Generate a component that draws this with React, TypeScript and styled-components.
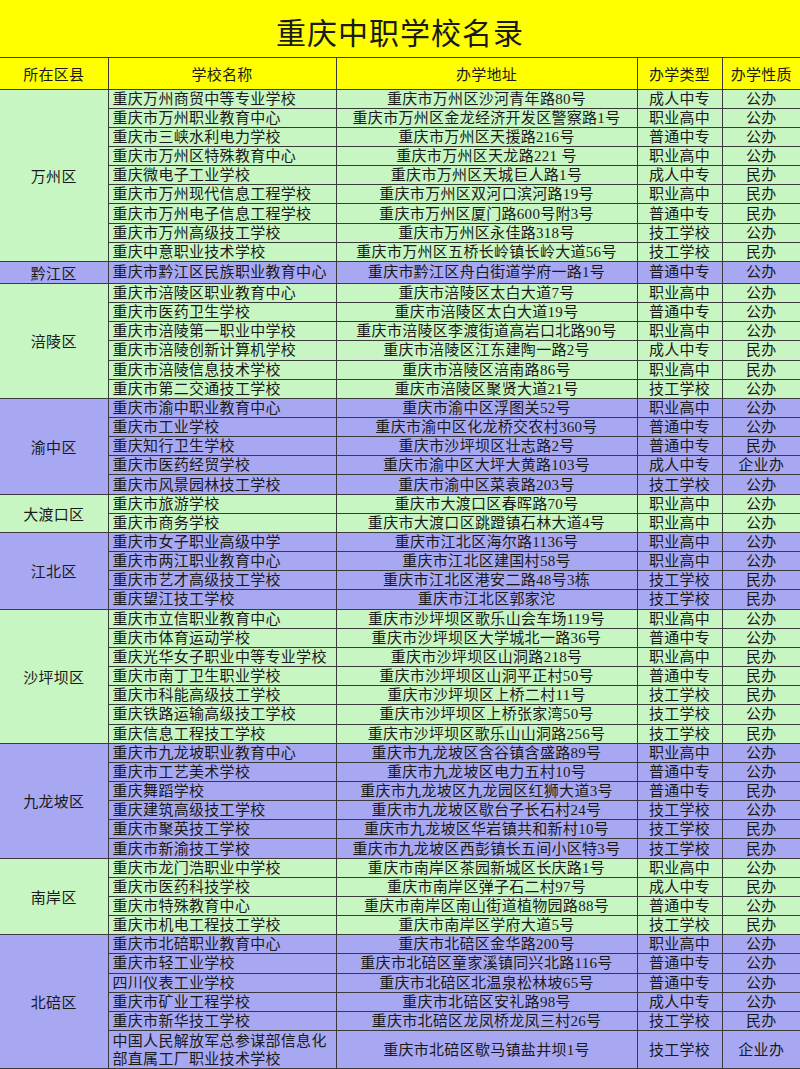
import styled, { createGlobalStyle } from "styled-components";

type Tone = "green" | "purple";

const tones: Record<Tone, string> = {
  green: "#c8f6c2",
  purple: "#a8a8f2",
};

const GlobalStyle = createGlobalStyle`
  html, body {
    margin: 0;
    padding: 0;
    background: #ffffff;
  }

  body {
    font-family: "Liberation Serif", "Noto Sans CJK SC", serif;
    color: #1a1a1a;
  }
`;

const Page = styled.div`
  width: 800px;
`;

const TitleBar = styled.div`
  display: flex;
  align-items: center;
  justify-content: center;

  height: 58px;
  background: #ffff00;
  border-bottom: 1px solid #3a3a3a;
  box-sizing: border-box;

  font-size: 30px;
  letter-spacing: 1px;
  padding-top: 4px;
`;

const Table = styled.table`
  width: 800px;
  table-layout: fixed;
  border-collapse: collapse;

  font-size: 15px;
  letter-spacing: 0.3px;
`;

const HeadRow = styled.tr`
  height: 31px;
  background: #ffff00;
`;

const HeadCell = styled.th`
  font-weight: 400;
  padding: 0;
  text-align: center;
  border: 1px solid #3a3a3a;
  border-top: none;

  &:first-child {
    border-left: none;
  }

  &:last-child {
    border-right: none;
  }
`;

const Row = styled.tr<{ $tone: Tone; $tall?: boolean }>`
  height: ${(p) => (p.$tall ? "38.4px" : "19.17px")};
  background: ${(p) => tones[p.$tone]};
`;

const DistrictCell = styled.td`
  padding: 0;
  text-align: center;
  vertical-align: middle;
  border: 1px solid #3a3a3a;
  border-left: none;
`;

const Cell = styled.td<{ $align?: "left" | "center" }>`
  padding: 0 2px 0 ${(p) => (p.$align === "left" ? "4px" : "2px")};
  text-align: ${(p) => p.$align ?? "center"};
  line-height: 18px;
  white-space: ${(p) => (p.$align === "left" ? "normal" : "nowrap")};
  border: 1px solid #3a3a3a;

  &:last-child {
    border-right: none;
  }
`;

type School = [string, string, string, string];

type Group = {
  district: string;
  tone: Tone;
  schools: School[];
};

const groups: Group[] = [
  {
    district: "万州区",
    tone: "green",
    schools: [
      ["重庆万州商贸中等专业学校", "重庆市万州区沙河青年路80号", "成人中专", "公办"],
      ["重庆市万州职业教育中心", "重庆市万州区金龙经济开发区警察路1号", "职业高中", "公办"],
      ["重庆市三峡水利电力学校", "重庆市万州区天援路216号", "普通中专", "公办"],
      ["重庆市万州区特殊教育中心", "重庆市万州区天龙路221 号", "职业高中", "公办"],
      ["重庆微电子工业学校", "重庆市万州区天城巨人路1号", "成人中专", "民办"],
      ["重庆市万州现代信息工程学校", "重庆市万州区双河口滨河路19号", "职业高中", "民办"],
      ["重庆市万州电子信息工程学校", "重庆市万州区厦门路600号附3号", "普通中专", "民办"],
      ["重庆市万州高级技工学校", "重庆市万州区永佳路318号", "技工学校", "公办"],
      ["重庆中意职业技术学校", "重庆市万州区五桥长岭镇长岭大道56号", "技工学校", "民办"],
    ],
  },
  {
    district: "黔江区",
    tone: "purple",
    schools: [
      ["重庆市黔江区民族职业教育中心", "重庆市黔江区舟白街道学府一路1号", "普通中专", "公办"],
    ],
  },
  {
    district: "涪陵区",
    tone: "green",
    schools: [
      ["重庆市涪陵区职业教育中心", "重庆市涪陵区太白大道7号", "职业高中", "公办"],
      ["重庆市医药卫生学校", "重庆市涪陵区太白大道19号", "普通中专", "公办"],
      ["重庆市涪陵第一职业中学校", "重庆市涪陵区李渡街道高岩口北路90号", "职业高中", "公办"],
      ["重庆市涪陵创新计算机学校", "重庆市涪陵区江东建陶一路2号", "成人中专", "民办"],
      ["重庆市涪陵信息技术学校", "重庆市涪陵区涪南路86号", "职业高中", "民办"],
      ["重庆市第二交通技工学校", "重庆市涪陵区聚贤大道21号", "技工学校", "公办"],
    ],
  },
  {
    district: "渝中区",
    tone: "purple",
    schools: [
      ["重庆市渝中职业教育中心", "重庆市渝中区浮图关52号", "职业高中", "公办"],
      ["重庆市工业学校", "重庆市渝中区化龙桥交农村360号", "普通中专", "公办"],
      ["重庆知行卫生学校", "重庆市沙坪坝区壮志路2号", "普通中专", "民办"],
      ["重庆市医药经贸学校", "重庆市渝中区大坪大黄路103号", "成人中专", "企业办"],
      ["重庆市风景园林技工学校", "重庆市渝中区菜袁路203号", "技工学校", "公办"],
    ],
  },
  {
    district: "大渡口区",
    tone: "green",
    schools: [
      ["重庆市旅游学校", "重庆市大渡口区春晖路70号", "职业高中", "公办"],
      ["重庆市商务学校", "重庆市大渡口区跳蹬镇石林大道4号", "职业高中", "公办"],
    ],
  },
  {
    district: "江北区",
    tone: "purple",
    schools: [
      ["重庆市女子职业高级中学", "重庆市江北区海尔路1136号", "职业高中", "公办"],
      ["重庆市两江职业教育中心", "重庆市江北区建国村58号", "职业高中", "公办"],
      ["重庆市艺才高级技工学校", "重庆市江北区港安二路48号3栋", "技工学校", "民办"],
      ["重庆望江技工学校", "重庆市江北区郭家沱", "技工学校", "民办"],
    ],
  },
  {
    district: "沙坪坝区",
    tone: "green",
    schools: [
      ["重庆市立信职业教育中心", "重庆市沙坪坝区歌乐山会车场119号", "职业高中", "公办"],
      ["重庆市体育运动学校", "重庆市沙坪坝区大学城北一路36号", "普通中专", "公办"],
      ["重庆光华女子职业中等专业学校", "重庆市沙坪坝区山洞路218号", "职业高中", "民办"],
      ["重庆市南丁卫生职业学校", "重庆市沙坪坝区山洞平正村50号", "普通中专", "民办"],
      ["重庆市科能高级技工学校", "重庆市沙坪坝区上桥二村11号", "技工学校", "民办"],
      ["重庆铁路运输高级技工学校", "重庆市沙坪坝区上桥张家湾50号", "技工学校", "公办"],
      ["重庆信息工程技工学校", "重庆市沙坪坝区歌乐山山洞路256号", "技工学校", "民办"],
    ],
  },
  {
    district: "九龙坡区",
    tone: "purple",
    schools: [
      ["重庆市九龙坡职业教育中心", "重庆市九龙坡区含谷镇含盛路89号", "职业高中", "公办"],
      ["重庆市工艺美术学校", "重庆市九龙坡区电力五村10号", "普通中专", "公办"],
      ["重庆舞蹈学校", "重庆市九龙坡区九龙园区红狮大道3号", "普通中专", "民办"],
      ["重庆建筑高级技工学校", "重庆市九龙坡区歇台子长石村24号", "技工学校", "公办"],
      ["重庆市聚英技工学校", "重庆市九龙坡区华岩镇共和新村10号", "技工学校", "民办"],
      ["重庆市新渝技工学校", "重庆市九龙坡区西彭镇长五间小区特3号", "技工学校", "民办"],
    ],
  },
  {
    district: "南岸区",
    tone: "green",
    schools: [
      ["重庆市龙门浩职业中学校", "重庆市南岸区茶园新城区长庆路1号", "职业高中", "公办"],
      ["重庆市医药科技学校", "重庆市南岸区弹子石二村97号", "成人中专", "民办"],
      ["重庆市特殊教育中心", "重庆市南岸区南山街道植物园路88号", "普通中专", "公办"],
      ["重庆市机电工程技工学校", "重庆市南岸区学府大道5号", "技工学校", "民办"],
    ],
  },
  {
    district: "北碚区",
    tone: "purple",
    schools: [
      ["重庆市北碚职业教育中心", "重庆市北碚区金华路200号", "职业高中", "公办"],
      ["重庆市轻工业学校", "重庆市北碚区童家溪镇同兴北路116号", "普通中专", "公办"],
      ["四川仪表工业学校", "重庆市北碚区北温泉松林坡65号", "普通中专", "公办"],
      ["重庆市矿业工程学校", "重庆市北碚区安礼路98号", "成人中专", "公办"],
      ["重庆市新华技工学校", "重庆市北碚区龙凤桥龙凤三村26号", "技工学校", "民办"],
      ["中国人民解放军总参谋部信息化部直属工厂职业技术学校", "重庆市北碚区歇马镇盐井坝1号", "技工学校", "企业办"],
    ],
  },
];

export default function App() {
  return (
    <Page>
      <GlobalStyle />
      <TitleBar>重庆中职学校名录</TitleBar>
      <Table>
        <colgroup>
          <col style={{ width: 108 }} />
          <col style={{ width: 228 }} />
          <col style={{ width: 301 }} />
          <col style={{ width: 85 }} />
          <col style={{ width: 78 }} />
        </colgroup>
        <thead>
          <HeadRow>
            <HeadCell>所在区县</HeadCell>
            <HeadCell>学校名称</HeadCell>
            <HeadCell>办学地址</HeadCell>
            <HeadCell>办学类型</HeadCell>
            <HeadCell>办学性质</HeadCell>
          </HeadRow>
        </thead>
        <tbody>
          {groups.map((g) =>
            g.schools.map((s, i) => (
              <Row key={g.district + i} $tone={g.tone} $tall={s[0].length > 14}>
                {i === 0 && <DistrictCell rowSpan={g.schools.length}>{g.district}</DistrictCell>}
                <Cell $align="left">{s[0]}</Cell>
                <Cell>{s[1]}</Cell>
                <Cell>{s[2]}</Cell>
                <Cell>{s[3]}</Cell>
              </Row>
            ))
          )}
        </tbody>
      </Table>
    </Page>
  );
}
